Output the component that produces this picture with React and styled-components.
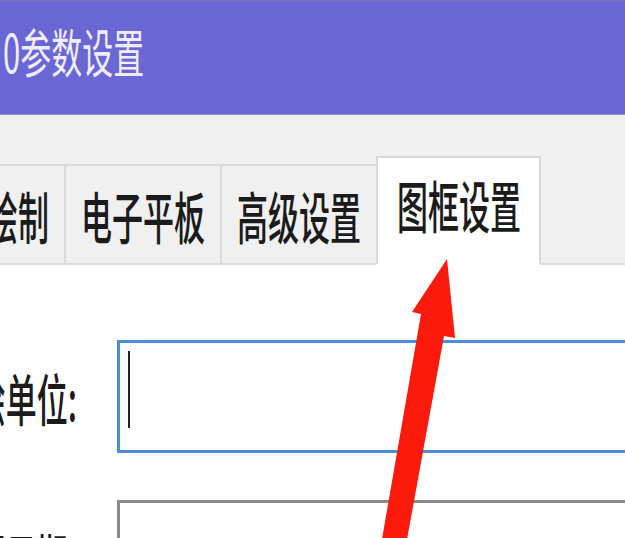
import React from "react";
import styled, { createGlobalStyle } from "styled-components";

const GlobalStyle = createGlobalStyle`
  html, body {
    margin: 0;
    padding: 0;
    background: #ffffff;
    overflow: hidden;
  }
  body {
    font-family: "Noto Sans CJK SC", "Microsoft YaHei", sans-serif;
  }
`;

const Window = styled.div`
  position: relative;
  width: 625px;
  height: 538px;
  overflow: hidden;
  display: flex;
  flex-direction: column;
  background: #ffffff;
`;

const TitleBar = styled.div`
  box-sizing: border-box;
  height: 115px;
  flex: none;
  background: #6a66d4;
  border-top: 2px solid #7772c9;
  border-bottom: 1px solid #8f8be0;
  display: flex;
  align-items: center;
`;

const Glyphs = styled.span`
  display: inline-block;
  font-size: 31px;
  font-weight: 500;
  line-height: 1;
  white-space: nowrap;
  transform: scaleY(${(p) => p.$stretch || 1.78});
  transform-origin: 50% 50%;
  color: ${(p) => p.$color || "#1b1b1b"};
`;

const TitleText = styled(Glyphs)`
  font-weight: 400;
  margin-left: 3px;
  margin-top: -16px;
`;

const TabStrip = styled.div`
  box-sizing: border-box;
  height: 150px;
  flex: none;
  background: #f0f0f0;
  border-bottom: 2px solid #dcdcdc;
  display: flex;
  align-items: flex-end;
`;

const TabList = styled.div`
  display: flex;
  align-items: flex-end;
  margin-left: -30px;
  margin-bottom: -2px;
`;

const Tab = styled.div`
  box-sizing: border-box;
  display: flex;
  align-items: center;
  height: ${(p) => (p.$active ? "109px" : "101px")};
  padding: ${(p) => (p.$active ? "0 18px 14px 19px" : "0 15px")};
  background: ${(p) => (p.$active ? "#ffffff" : "#f0f0f0")};
  border-top: 2px solid #d9d9d9;
  border-left: 2px solid #d9d9d9;
  border-right: ${(p) => (p.$active ? "2px solid #d9d9d9" : "none")};
  border-bottom: ${(p) => (p.$active ? "2px solid #ffffff" : "2px solid #dcdcdc")};
`;

const Content = styled.div`
  flex: 1;
  background: #ffffff;
  padding-top: 75px;
`;

const Form = styled.div`
  width: 800px;
  display: grid;
  grid-template-columns: 77px 1fr;
  column-gap: 40px;
  row-gap: 47px;
`;

const LabelCell = styled.div`
  display: flex;
  justify-content: flex-end;
  align-items: center;
  min-width: 0;
`;

const Field = styled.div`
  box-sizing: border-box;
  height: 113px;
  background: #ffffff;
  border: 3px solid ${(p) => (p.$focused ? "#4a8ed6" : "#8a8a8a")};
  display: flex;
  align-items: flex-start;
`;

const Caret = styled.span`
  display: block;
  width: 2px;
  height: 77px;
  margin: 8px 0 0 8px;
  background: #222222;
`;

const ArrowLayer = styled.svg`
  position: absolute;
  left: 0;
  top: 0;
  width: 625px;
  height: 538px;
  pointer-events: none;
`;

const tabs = ["绘制", "电子平板", "高级设置", "图框设置"];

export default function App() {
  return (
    <>
      <GlobalStyle />
      <Window>
        <TitleBar>
          <TitleText $color="#eeedfb" $stretch={1.7}>
            0参数设置
          </TitleText>
        </TitleBar>
        <TabStrip>
          <TabList>
            {tabs.map((t, i) => (
              <Tab key={t} $active={i === 3}>
                <Glyphs>{t}</Glyphs>
              </Tab>
            ))}
          </TabList>
        </TabStrip>
        <Content>
          <Form>
            <LabelCell>
              <Glyphs>测绘单位:</Glyphs>
            </LabelCell>
            <Field $focused>
              <Caret />
            </Field>
            <LabelCell>
              <Glyphs>测图日期:</Glyphs>
            </LabelCell>
            <Field />
          </Form>
        </Content>
        <ArrowLayer viewBox="0 0 625 538">
          <polygon
            points="447,259 455,338 444,336 406,545 381,545 421,314 412,312"
            fill="#fb1a0c"
          />
        </ArrowLayer>
      </Window>
    </>
  );
}
